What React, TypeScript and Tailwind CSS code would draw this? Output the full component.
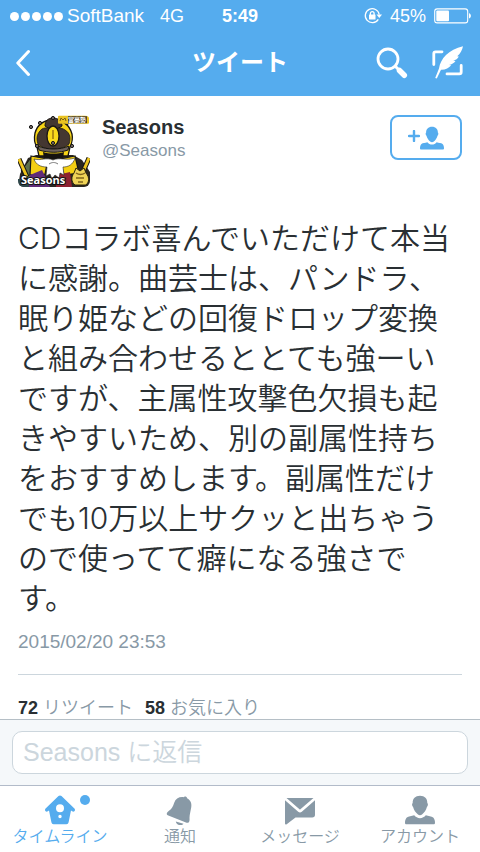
import type { ReactNode } from "react";

function BirdhouseIcon() {
  return (
    <svg viewBox="0 0 30 30" className="h-[30px] w-[30px]" fill="currentColor" aria-hidden="true">
      <path
        fillRule="evenodd"
        d="M15 .5c.6 0 1 .2 1.500.6L29.400 13.600c.8.8.7 1.900 0 2.600-.6.600-1.500.600-2.200.1L26 15.400l-2.400 11.900c-.3 1.200-1 1.900-2.200 1.900H8.600c-1.200 0-1.900-.7-2.200-1.900L4 15.400l-1.200.9c-.7.5-1.600.5-2.200-.1-.7-.7-.8-1.800 0-2.600L13.500 1.100c.5-.4.9-.6 1.500-.6ZM15 9.200a4 4 0 1 0 0 8 4 4 0 0 0 0-8Zm0 10.600a1.700 1.700 0 1 0 0 3.400 1.700 1.700 0 0 0 0-3.400Z"
      />
    </svg>
  );
}

function BellIcon() {
  return (
    <svg viewBox="0 0 30 30" className="h-[30px] w-[30px]" fill="currentColor" aria-hidden="true">
      <path d="M18.600 2.200c.9-1.300 3.400-.6 3.500 1 3.500 1.900 4.900 5.200 4.100 9.400-.8 4.400-1.600 7.400-1.700 10.300.1 1.500.1 2.500-.2 3.400-.5 1.400-1.400 1.800-2.700 1.400L3.300 20.400c-1.600-.5-2-1.700-1.100-2.900.5-.8 1.300-1.300 2.100-1.900 2.300-1.700 3.700-4 4.800-7.600 1.500-4.300 4.900-6.300 9.500-5.800Z" />
      <path d="M10.800 26.500l7.700 2.300c-1 1.300-2.700 1.800-4.500 1.200-1.700-.6-2.900-1.800-3.200-3.500Z" />
    </svg>
  );
}

function EnvelopeIcon() {
  return (
    <svg viewBox="0 0 30 30" className="h-[30px] w-[30px]" fill="currentColor" aria-hidden="true">
      <path d="M1.500 3h27L15.400 14.300c-.3.300-.6.300-.9 0Z" />
      <path d="M0 5.300l13.200 11.400c1.200 1 2.400 1 3.600 0L30 5.300v14.400c0 1.800-1 2.800-2.800 2.800H10.500L1.700 29.200C.8 29.800 0 29.500 0 28.500Z" />
    </svg>
  );
}

function PersonIcon({ className }: { className: string }) {
  return (
    <svg viewBox="0 0 30 30" className={className} fill="currentColor" aria-hidden="true">
      <path d="M15 .8c4.700 0 7.500 3 7.300 7.300 1 .5.800 2.900-.4 4-.8 3-2.600 5.600-4.600 7.200-1.500 1.200-3.100 1.200-4.600 0-2-1.600-3.800-4.200-4.600-7.200-1.200-1.100-1.400-3.500-.4-4C7.500 3.800 10.300.8 15 .8Z" />
      <path d="M9.200 20.300c1.400 1.700 3.600 2.900 5.800 2.900s4.400-1.200 5.800-2.900c2.700 1.100 5.700.7 7.400 2.200 1.100 1 1.800 3 1.800 5.200 0 1.100-.5 1.600-1.600 1.600H1.600C.5 29.300 0 28.800 0 27.700c0-2.200.7-4.200 1.800-5.200 1.700-1.500 4.700-1.100 7.400-2.200Z" />
    </svg>
  );
}

function SearchIcon() {
  return (
    <svg viewBox="0 0 32 32" className="h-8 w-8" fill="none" stroke="currentColor" aria-hidden="true">
      <circle cx="12" cy="12" r="10" strokeWidth="2.800" />
      <path d="M19.500 19.500l3 3" strokeWidth="3" />
      <path d="M23.500 23.500l4.800 4.800" strokeWidth="5.500" strokeLinecap="round" />
    </svg>
  );
}

function ComposeIcon() {
  return (
    <svg viewBox="0 0 32 34" className="h-[34px] w-8" aria-hidden="true">
      <path
        d="M10 5.800H3.600c-1.200 0-1.800.6-1.800 1.800v11M29.200 19.500v6.600c0 1.200-.6 1.800-1.800 1.800H15"
        fill="none"
        stroke="currentColor"
        strokeWidth="2.800"
        strokeLinecap="round"
      />
      <path
        d="M31 .3C24 2 18 5 14 9c-4 4-6.300 8.500-7 13.500L3.200 32l1.600.6L9 23.700c4.200.2 8-1.600 10.200-4.500l-2.200-.3c2.900-.7 5-1.900 6.500-4l-2.300-.3c2.600-.7 4.500-2 5.600-4.200l-1.600-.2C28.200 8 30.300 4 31 .3Z"
        fill="currentColor"
      />
    </svg>
  );
}

function RotationLockIcon() {
  return (
    <svg viewBox="0 0 18 18" className="h-[18px] w-[18px]" fill="none" stroke="currentColor" aria-hidden="true">
      <path d="M14.300 12.300A7 7 0 1 1 15.200 7.500" strokeWidth="1.300" />
      <path d="M12.500 7.500h5.500l-2.700 3.600Z" fill="currentColor" stroke="none" />
      <rect x="5" y="7.500" width="6.500" height="5" rx=".5" fill="currentColor" stroke="none" />
      <path d="M6.400 8V6.400a1.850 1.850 0 0 1 3.700 0V8" strokeWidth="1.300" />
    </svg>
  );
}

function BatteryIcon() {
  return (
    <svg viewBox="0 0 38 16" className="h-4 w-[38px]" aria-hidden="true">
      <rect x=".7" y=".9" width="33" height="14" rx="2.500" fill="none" stroke="currentColor" strokeWidth="1.100" />
      <rect x="2.300" y="2.500" width="12.700" height="10.800" rx="1" fill="currentColor" />
      <path d="M35 5.300c2.500.6 2.500 4.600 0 5.200Z" fill="currentColor" />
    </svg>
  );
}

const KNOBS = [
  [35, 3],
  [22, 8],
  [13, 12],
  [49, 8],
  [19, 31],
  [35, 28],
  [54, 31],
];

function Avatar() {
  return (
    <svg viewBox="0 0 72 72" className="h-[72px] w-[72px] rounded-md" role="img" aria-label="Seasons avatar">
      <rect width="72" height="72" fill="#fff" />
      <path d="M2 59L10 43l8-3h37l9 5 8 12v15H0Z" fill="#2b2721" />
      <path d="M3 56l9-12 8-2 2 14-12 8Z" fill="#5d6f4c" stroke="#161616" />
      <path d="M1 44l8 18M71 43l-7 16" stroke="#161616" strokeWidth="5" />
      <path d="M1 44l8 18M71 43l-7 16" stroke="#eec51c" strokeWidth="3" />
      <path d="M13 41l17 3-3 15-15 1ZM57 41L42 44l4 16 15-2Z" fill="#f4cf13" stroke="#161616" strokeWidth="1.200" />
      <path d="M12 60l12-5 8 17H9Z" fill="#602b79" />
      <path d="M39 60l13-3 2 15H38Z" fill="#8d2130" />
      <path d="M0 64h11v8H0Z" fill="#30484c" />
      <path
        d="M17 18C20 8 27 5 35 5s16 3 19 14c1 5 0 9-2 13l-2 9H21l-2-9c-3-4-3-9-2-14Z"
        fill="#f6d316"
        stroke="#171411"
        strokeWidth="1.300"
      />
      <path d="M27 11c0-5 3-8 8-8s9 3 9 8c-5 4-12 4-17 0Z" fill="#443731" stroke="#1a1613" />
      <path
        d="M20 29c-2-6-1-11 4-15 4-2 8-1 11 2 3-3 8-4 12-1 5 3 6 8 4 14-4 4-10 5-16 5s-11-1-15-5Z"
        fill="#443731"
        stroke="#1a1613"
        strokeWidth=".8"
      />
      <ellipse cx="35" cy="21" rx="6" ry="10" fill="#f9d91c" stroke="#1b1713" strokeWidth="1.300" />
      <path d="M35 15v9" stroke="#9a7410" strokeWidth="1.500" />
      <path d="M20 31c9 4 22 4 31 0l-1 4c-8 3-20 3-29 0Z" fill="#6d615b" stroke="#151515" />
      <path d="M25 37c6 2 15 2 21 0l-1 7H26Z" fill="#15120f" />
      {KNOBS.map(([x, y]) => (
        <circle key={`${x}-${y}`} cx={x} cy={y} r="1.600" fill="#776a67" stroke="#171717" />
      ))}
      <path
        d="M16 44c7 2 12-2 19 1 7-3 13 1 22-2-2 7-7 9-12 9l1 8-4-2-1 5-4-3-3 4-2-5-4 2 1-9c-6 0-11-2-13-8Z"
        fill="#fff"
        stroke="#262626"
        strokeWidth=".6"
      />
      <path d="M31 49c3-2 6-2 9 0" fill="none" stroke="#777" />
      <rect x="40" y=".7" width="31" height="8" rx="1" fill="#e9c322" />
      <path d="M42 6l1-3 2 2 2-2 1 3" fill="none" stroke="#7c6118" />
      <rect x="50" y="1.200" width="19" height="7" fill="#4f432d" />
      <text x="50" y="7" fontSize="6" fill="#fff" className="font-['Noto_Sans_CJK_JP',sans-serif] font-bold">
        富豪勢
      </text>
      <path d="M56 58l2-5 4 3 4-3 2 5c4 5 3 9 0 12H57c-4-3-4-8-1-12Z" fill="#efd357" stroke="#2c250c" />
      <path d="M58 58c3 2 6 2 9 0M58 63h8M60 67h5" fill="none" stroke="#80651d" strokeWidth="1.300" />
      <text
        x="3"
        y="69"
        fontSize="11"
        fill="#fff"
        stroke="#111"
        strokeWidth="2"
        paintOrder="stroke"
        className="font-['Open_Sans',sans-serif] font-bold"
      >
        Seasons
      </text>
    </svg>
  );
}

type Tab = { label: string; icon: ReactNode; active?: boolean };

const TABS: Tab[] = [
  { label: "タイムライン", icon: <BirdhouseIcon />, active: true },
  { label: "通知", icon: <BellIcon /> },
  { label: "メッセージ", icon: <EnvelopeIcon /> },
  { label: "アカウント", icon: <PersonIcon className="h-[30px] w-[30px]" /> },
];

function StatusBar() {
  return (
    <div className="grid h-8 grid-cols-[1fr_auto_1fr] items-center px-2 text-lg leading-8">
      <div className="flex items-center">
        <div className="flex gap-[2px] pl-[2px]">
          {[0, 1, 2, 3, 4].map((dot) => (
            <span key={dot} className="h-[9px] w-[9px] rounded-full bg-white" />
          ))}
        </div>
        <span className="pl-1 text-[19px]">SoftBank</span>
        <span className="pl-4">4G</span>
      </div>
      <span className="font-bold">5:49</span>
      <div className="flex items-center justify-end">
        <RotationLockIcon />
        <span className="px-2">45%</span>
        <BatteryIcon />
      </div>
    </div>
  );
}

export default function App() {
  return (
    <div className="flex h-screen flex-col bg-white font-['Liberation_Sans','Noto_Sans_CJK_JP',sans-serif] text-[#292f33]">
      <header className="h-24 shrink-0 bg-[#55acee] text-white">
        <StatusBar />
        <div className="grid h-[62px] grid-cols-[1fr_auto_1fr] items-center px-4">
          <button type="button" aria-label="戻る" className="justify-self-start">
            <svg viewBox="0 0 16 28" className="h-7 w-4" fill="none" stroke="currentColor" aria-hidden="true">
              <path d="M12.500 2.500L1.800 14l10.700 11.500" strokeWidth="3" strokeLinecap="round" strokeLinejoin="round" />
            </svg>
          </button>
          <h1 className="text-2xl font-bold">ツイート</h1>
          <div className="flex items-center justify-end gap-6">
            <button type="button" aria-label="検索">
              <SearchIcon />
            </button>
            <button type="button" aria-label="ツイートする">
              <ComposeIcon />
            </button>
          </div>
        </div>
      </header>

      <main className="min-h-0 flex-1 overflow-hidden px-[18px] pt-[19px]">
        <article>
          <div className="flex items-start">
            <Avatar />
            <a href="#profile" className="min-w-0 flex-1 pl-3">
              <span className="block text-xl leading-6 font-bold">Seasons</span>
              <span className="block text-[17px] leading-6 text-[#8899a6]">@Seasons</span>
            </a>
            <button
              type="button"
              aria-label="フォローする"
              className="flex h-[45px] w-[72px] items-center justify-center rounded-lg border-2 border-[#55acee] text-[#55acee]"
            >
              <svg viewBox="0 0 12 12" className="mb-1 h-3 w-3" stroke="currentColor" aria-hidden="true">
                <path d="M6 1v10M1 6h10" strokeWidth="2.400" strokeLinecap="round" />
              </svg>
              <PersonIcon className="h-6 w-6" />
            </button>
          </div>
          <p className="pt-[31px] font-['Inter','Noto_Sans_CJK_JP',sans-serif] text-3xl leading-10 font-[350]">
            CDコラボ喜んでいただけて本当に感謝。曲芸士は、パンドラ、眠り姫などの回復ドロップ変換と組み合わせるととても強ーいですが、主属性攻撃色欠損も起きやすいため、別の副属性持ちをおすすめします。副属性だけでも10万以上サクッと出ちゃうので使ってて癖になる強さです。
          </p>
          <time dateTime="2015-02-20T23:53" className="block pt-3 text-[19px] leading-6 text-[#8899a6]">
            2015/02/20 23:53
          </time>
          <div className="mt-5 flex gap-3 border-t border-[#ccd6dd] pt-[21px] text-lg leading-6 text-[#8899a6]">
            <a href="#retweets" className="font-[350]">
              <b className="font-bold text-[#292f33]">72</b> リツイート
            </a>
            <a href="#favorites" className="font-[350]">
              <b className="font-bold text-[#292f33]">58</b> お気に入り
            </a>
          </div>
        </article>
      </main>

      <form className="shrink-0 border-t border-[#b5bfc6] bg-[#f5f8fa] px-3 py-[11px]">
        <input
          type="text"
          aria-label="Seasons に返信"
          placeholder="Seasons に返信"
          className="block h-[43px] w-full rounded-[10px] border border-[#ccd6dd] bg-white px-[10px] text-[25px] font-[350] placeholder:text-[#ccd6dd]"
        />
      </form>

      <nav className="grid h-[67px] shrink-0 grid-cols-4 border-t border-[#b2bbc9]">
        {TABS.map((tab) => (
          <a
            key={tab.label}
            href="#tab"
            aria-current={tab.active ? "page" : undefined}
            className={`flex flex-col items-center pt-[9px] ${tab.active ? "text-[#55acee]" : "text-[#8899a6]"}`}
          >
            <span className="relative">
              {tab.icon}
              {tab.active && <span className="absolute top-0 -right-[15px] h-[10px] w-[10px] rounded-full bg-[#55acee]" />}
            </span>
            <span className="text-base leading-6 font-[350]">{tab.label}</span>
          </a>
        ))}
      </nav>
    </div>
  );
}
